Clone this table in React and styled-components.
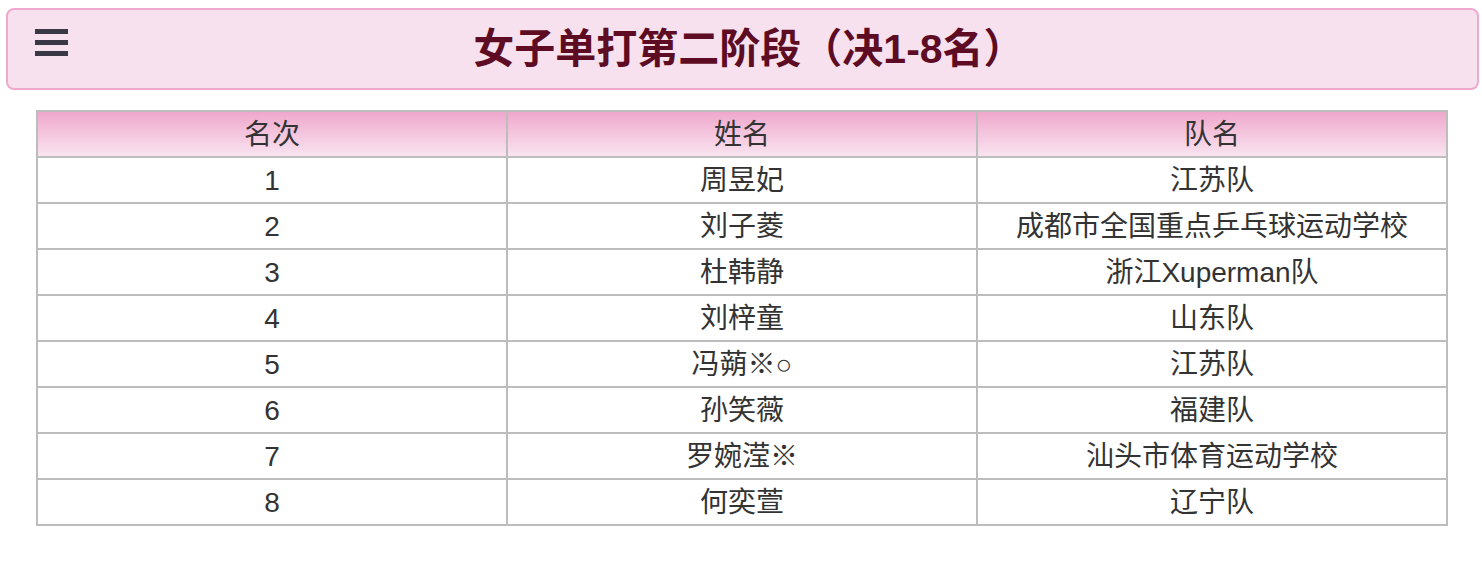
import React from "react";
import styled, { createGlobalStyle } from "styled-components";

const Global = createGlobalStyle`
  html, body { margin: 0; padding: 0; background: #fff; }
  body { font-family: "Liberation Sans", "Noto Sans CJK SC", sans-serif; }
`;

const Page = styled.div`
  display: flex;
  flex-direction: column;
  padding-top: 8px;
`;

const Header = styled.header`
  box-sizing: border-box;
  width: 1473px;
  height: 82px;
  margin-left: 6px;
  display: grid;
  grid-template-columns: 1fr auto 1fr;
  align-items: center;
  background: #f7e1ee;
  border: 2px solid #efa9cd;
  border-radius: 8px;
  padding: 0 0 0 27px;
`;

const Burger = styled.button`
  justify-self: start;
  align-self: start;
  margin-top: 19px;
  display: flex;
  flex-direction: column;
  gap: 6px;
  padding: 0;
  border: 0;
  background: transparent;
  cursor: pointer;
`;

const Bar = styled.span`
  display: block;
  width: 33px;
  height: 5px;
  background: #393945;
`;

const Title = styled.h1`
  margin: 0;
  font-size: 41px;
  font-weight: 700;
  color: #5d0c24;
  font-family: "Liberation Sans", "Noto Sans CJK SC", sans-serif;
  line-height: 1;
  transform: translateX(-7px);
`;

const Table = styled.table`
  width: 1412px;
  margin: 20px 0 0 36px;
  border-collapse: collapse;
  table-layout: fixed;
  font-size: 28px;
  color: #333;
`;

const Th = styled.th`
  border: 2px solid #bdbdbd;
  height: 43px;
  padding: 1px 0 0;
  font-weight: 400;
  text-align: center;
  line-height: 1;
  background: linear-gradient(to bottom, #efa8cc, #f9e4f0);
`;

const Td = styled.td`
  border: 2px solid #bdbdbd;
  height: 43px;
  padding: 1px 0 0;
  text-align: center;
  line-height: 1;
`;

const rows = [
  ["1", "周昱妃", "江苏队"],
  ["2", "刘子菱", "成都市全国重点乒乓球运动学校"],
  ["3", "杜韩静", "浙江Xuperman队"],
  ["4", "刘梓童", "山东队"],
  ["5", "冯蒴※○", "江苏队"],
  ["6", "孙笑薇", "福建队"],
  ["7", "罗婉滢※", "汕头市体育运动学校"],
  ["8", "何奕萱", "辽宁队"],
];

export default function App() {
  return (
    <Page>
      <Global />
      <Header>
        <Burger aria-label="menu">
          <Bar />
          <Bar />
          <Bar />
        </Burger>
        <Title>女子单打第二阶段（决1-8名）</Title>
        <span />
      </Header>
      <Table>
        <thead>
          <tr>
            <Th>名次</Th>
            <Th>姓名</Th>
            <Th>队名</Th>
          </tr>
        </thead>
        <tbody>
          {rows.map((r) => (
            <tr key={r[0]}>
              <Td>{r[0]}</Td>
              <Td>{r[1]}</Td>
              <Td>{r[2]}</Td>
            </tr>
          ))}
        </tbody>
      </Table>
    </Page>
  );
}
